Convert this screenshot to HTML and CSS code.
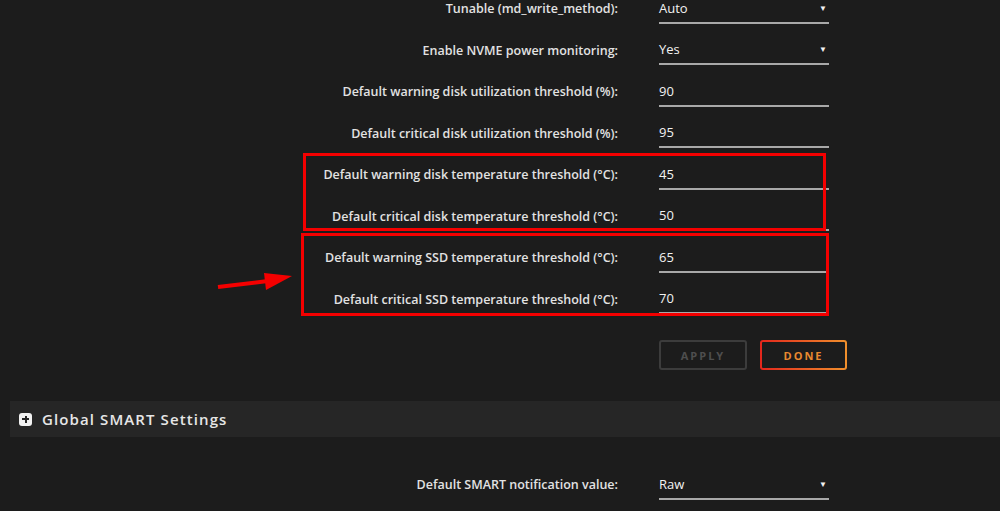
FILE: index.html
```html
<!DOCTYPE html>
<html lang="en">

<head>
    <meta charset="UTF-8">
    <meta name="viewport" content="width=device-width, initial-scale=1.0">
    <title>Disk Settings</title>
    <link rel="stylesheet" href="styles.css">
</head>

<body>
    <div class="page">
        <div class="form">
            <div class="row">
                <label>Tunable (md_write_method):</label>
                <div class="field select">Auto<span class="caret">&#9660;</span></div>
            </div>
            <div class="row">
                <label>Enable NVME power monitoring:</label>
                <div class="field select">Yes<span class="caret">&#9660;</span></div>
            </div>
            <div class="row">
                <label>Default warning disk utilization threshold (%):</label>
                <div class="field">90</div>
            </div>
            <div class="row">
                <label>Default critical disk utilization threshold (%):</label>
                <div class="field">95</div>
            </div>
            <div class="row">
                <label>Default warning disk temperature threshold (&deg;C):</label>
                <div class="field">45</div>
            </div>
            <div class="row">
                <label>Default critical disk temperature threshold (&deg;C):</label>
                <div class="field">50</div>
            </div>
            <div class="row">
                <label>Default warning SSD temperature threshold (&deg;C):</label>
                <div class="field">65</div>
            </div>
            <div class="row">
                <label>Default critical SSD temperature threshold (&deg;C):</label>
                <div class="field">70</div>
            </div>

            <div class="buttons">
                <button class="btn apply">APPLY</button>
                <button class="btn done">DONE</button>
            </div>
        </div>

        <div class="section-bar">
            <span class="plus"></span>
            <span class="section-title">Global SMART Settings</span>
        </div>

        <div class="form smart">
            <div class="row">
                <label>Default SMART notification value:</label>
                <div class="field select">Raw<span class="caret">&#9660;</span></div>
            </div>
        </div>

        <!-- annotations -->
        <div class="mark mark-disk"></div>
        <div class="mark mark-ssd"></div>
        <svg class="arrow" width="80" height="24" viewBox="0 0 80 24">
            <line x1="2" y1="15" x2="52" y2="9" stroke="#f40000" stroke-width="4" />
            <polygon points="48,1 76,4 50,18" fill="#f40000" />
        </svg>
    </div>
</body>
</html>
```

FILE: styles.css
```css
* {
    margin: 0;
    padding: 0;
    box-sizing: border-box;
}

body {
    background-color: #1c1c1c;
    color: #e4e4e4;
    font-family: "Open Sans", "Liberation Sans", sans-serif;
    overflow: hidden;
    height: 511px;
}

.page {
    position: relative;
    display: flow-root;
    height: 511px;
}

.form {
    margin-top: -12px;
}

.row {
    display: grid;
    grid-template-columns: 618px 170px;
    column-gap: 41px;
    align-items: center;
    height: 41.5px;
}

.row label {
    text-align: right;
    font-size: 12.5px;
    font-weight: 600;
    color: #e2e2e2;
}

.field {
    position: relative;
    height: 30px;
    line-height: 28px;
    border-bottom: 2px solid #a8a8a8;
    font-size: 13px;
    color: #f2f2f2;
}

.caret {
    position: absolute;
    right: 2px;
    top: 0;
    font-size: 8px;
    color: #f2f2f2;
}

.buttons {
    display: flex;
    gap: 13px;
    margin-top: 20px;
    padding-left: 659px;
}

.btn {
    width: 88px;
    height: 30px;
    border-radius: 3px;
    font-family: "Open Sans", "Liberation Sans", sans-serif;
    font-size: 11px;
    font-weight: 700;
    letter-spacing: 2px;
    cursor: pointer;
}

.apply {
    background: transparent;
    border: 2px solid #3c3c3c;
    color: #4e4e4e;
}

.done {
    width: 87px;
    border: 2px solid transparent;
    background: linear-gradient(#1c1c1c, #1c1c1c) padding-box,
        linear-gradient(90deg, #e3261c, #f0902c) border-box;
    color: #e9892f;
}

.section-bar {
    display: flex;
    align-items: center;
    gap: 10px;
    height: 36px;
    margin-top: 31px;
    margin-left: 10px;
    padding-left: 9px;
    background-color: #262626;
}

.plus {
    position: relative;
    width: 13px;
    height: 13px;
    border-radius: 3px;
    background-color: #f2f2f2;
}

.plus::before,
.plus::after {
    content: '';
    position: absolute;
    background-color: #262626;
}

.plus::before {
    left: 3px;
    top: 5.5px;
    width: 7px;
    height: 2px;
}

.plus::after {
    left: 5.5px;
    top: 3px;
    width: 2px;
    height: 7px;
}

.section-title {
    font-size: 15px;
    font-weight: 600;
    letter-spacing: 1.1px;
    color: #e6e6e6;
}

.form.smart {
    margin-top: 27px;
}

.mark {
    position: absolute;
    border: 3px solid #f40000;
}

.mark-disk {
    left: 303px;
    top: 153px;
    width: 523px;
    height: 78px;
}

.mark-ssd {
    left: 301px;
    top: 233px;
    width: 528px;
    height: 83px;
}

.arrow {
    position: absolute;
    left: 216px;
    top: 272px;
}
```
